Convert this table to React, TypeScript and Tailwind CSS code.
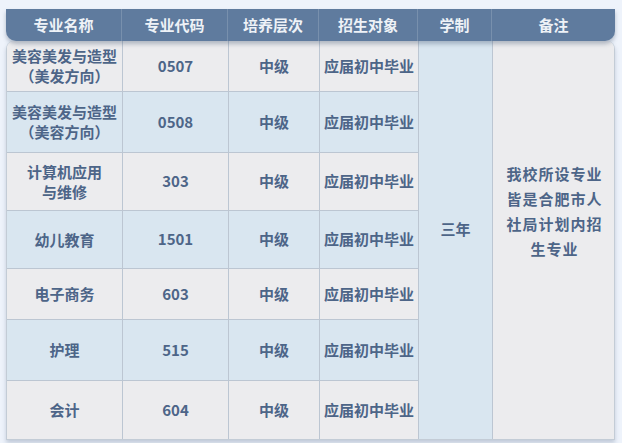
import React from "react";

const rows = [
  { name: ["美容美发与造型", "（美发方向）"], code: "0507", h: 51, blue: false },
  { name: ["美容美发与造型", "（美容方向）"], code: "0508", h: 61, blue: true },
  { name: ["计算机应用", "与维修"], code: "303", h: 58, blue: false },
  { name: ["幼儿教育"], code: "1501", h: 58, blue: true },
  { name: ["电子商务"], code: "603", h: 51, blue: false },
  { name: ["护理"], code: "515", h: 61, blue: true },
  { name: ["会计"], code: "604", h: 58, blue: false },
];

const headers = ["专业名称", "专业代码", "培养层次", "招生对象", "学制", "备注"];

export default function App() {
  const font = { fontFamily: '"Noto Sans CJK SC", "Noto Sans", sans-serif' };
  return (
    <div className="w-[622px] h-[443px] bg-[#eef3fb] pt-[9px] pl-[6px] overflow-hidden" style={font}>
      <div className="w-[609px]">
        <div className="relative z-10 grid grid-cols-[116px_106px_91px_99px_74px_123px] h-[32px] bg-[#5f7b9e] rounded-bl-[10px] rounded-br-[10px] shadow-[0_3px_4px_rgba(60,80,110,0.35)]">
          {headers.map((h, i) => (
            <div
              key={h}
              className={`flex items-center justify-center text-[15px] font-bold text-[#eef2f7] ${i < 5 ? "border-r border-[#7890ad]" : ""}`}
            >
              {h}
            </div>
          ))}
        </div>
        <div className="grid grid-cols-[116px_106px_91px_99px_74px_123px] grid-rows-[51px_61px_58px_58px_51px_61px_58px] rounded-t-[8px] overflow-hidden border-x border-b border-[#c3ccd6] shadow-[0_3px_4px_rgba(90,110,140,0.3)] text-[15px] font-bold text-[#4d6588]">
          {rows.map((r, i) => {
            const bg = r.blue ? "bg-[#d9e6f0]" : "bg-[#ececee]";
            const bb = i < rows.length - 1 ? "border-b border-[#bcc6d2]" : "";
            return (
              <React.Fragment key={i}>
                <div
                  className={`${bg} ${bb} border-r border-[#bcc6d2] flex flex-col items-center justify-center leading-[20px]`}
                  style={{ gridColumn: 1, gridRow: i + 1 }}
                >
                  {r.name.map((n) => (
                    <span key={n}>{n}</span>
                  ))}
                </div>
                <div
                  className={`${bg} ${bb} border-r border-[#bcc6d2] flex items-center justify-center`}
                  style={{ gridColumn: 2, gridRow: i + 1 }}
                >
                  {r.code}
                </div>
                <div
                  className={`${bg} ${bb} border-r border-[#bcc6d2] flex items-center justify-center`}
                  style={{ gridColumn: 3, gridRow: i + 1 }}
                >
                  中级
                </div>
                <div
                  className={`${bg} ${bb} border-r border-[#bcc6d2] flex items-center justify-center`}
                  style={{ gridColumn: 4, gridRow: i + 1 }}
                >
                  应届初中毕业
                </div>
              </React.Fragment>
            );
          })}
          <div className="col-start-5 row-start-1 row-span-7 bg-[#d9e6f0] border-r border-[#bcc6d2] flex items-center justify-center pb-[22px]">
            三年
          </div>
          <div className="col-start-6 row-start-1 row-span-7 bg-[#ececee] flex flex-col items-center justify-center pb-[58px] leading-[25px] tracking-[1px]">
            <span>我校所设专业</span>
            <span>皆是合肥市人</span>
            <span>社局计划内招</span>
            <span>生专业</span>
          </div>
        </div>
      </div>
    </div>
  );
}
